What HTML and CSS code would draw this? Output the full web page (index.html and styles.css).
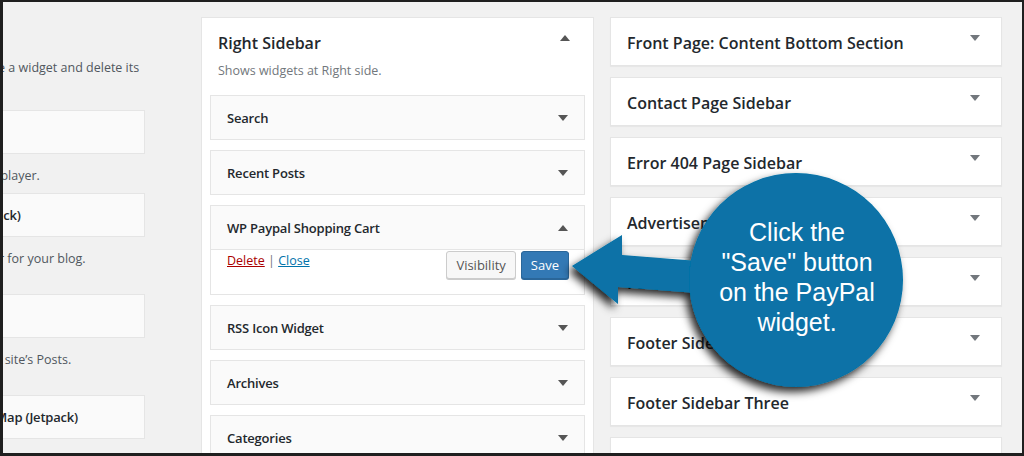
FILE: index.html
```html
<!DOCTYPE html>
<html lang="en">
<head>
  <meta charset="UTF-8">
  <title>Widgets</title>
  <link rel="stylesheet" href="styles.css">
</head>
<body>
  <div class="frame">
    <div class="cols">

      <div class="available">
        <div class="available-inner">
          <p class="intro">To activate a widget drag it to a sidebar or click on it. To deactivate a widget and delete its<br>settings, drag it back.</p>
          <div class="widget-grid">
            <div class="item">
              <div class="card">Archives</div>
              <p class="desc">A monthly archive of your site’s Posts.</p>
            </div>
            <div class="item">
              <div class="card">Audio</div>
              <p class="desc">Displays an audio player.</p>
            </div>
            <div class="item">
              <div class="card">Authors (Jetpack)</div>
              <p class="desc">Display blogs authors with avatars and recent posts, sorted by most recent.</p>
            </div>
            <div class="item">
              <div class="card">Blog Stats (Jetpack)</div>
              <p class="desc">Show a hit counter for your blog.</p>
            </div>
            <div class="item">
              <div class="card">Blog Subscriptions (Jetpack)</div>
              <p class="desc">Add an email signup form to allow people to subscribe to your blog.</p>
            </div>
            <div class="item">
              <div class="card">Calendar</div>
              <p class="desc">A calendar of your site’s Posts.</p>
            </div>
            <div class="item">
              <div class="card">Categories</div>
              <p class="desc">A list or dropdown of categories.</p>
            </div>
            <div class="item">
              <div class="card">Contact Info &amp; Map (Jetpack)</div>
              <p class="desc">Display your location, hours, and contact information.</p>
            </div>
          </div>
        </div>
      </div>

      <div class="sidebar">
        <div class="sidebar-head">
          <h2>Right Sidebar</h2>
          <span class="arrow up"></span>
        </div>
        <p class="sidebar-desc">Shows widgets at Right side.</p>

        <div class="widget"><div class="widget-top"><span>Search</span><span class="arrow down"></span></div></div>
        <div class="widget"><div class="widget-top"><span>Recent Posts</span><span class="arrow down"></span></div></div>
        <div class="widget">
          <div class="widget-top open"><span>WP Paypal Shopping Cart</span><span class="arrow up"></span></div>
          <div class="widget-inside">
            <div class="links"><a href="#" class="delete">Delete</a> | <a href="#" class="close">Close</a></div>
            <div class="buttons">
              <button class="btn">Visibility</button>
              <button class="btn primary">Save</button>
            </div>
          </div>
        </div>
        <div class="widget"><div class="widget-top"><span>RSS Icon Widget</span><span class="arrow down"></span></div></div>
        <div class="widget"><div class="widget-top"><span>Archives</span><span class="arrow down"></span></div></div>
        <div class="widget"><div class="widget-top"><span>Categories</span><span class="arrow down"></span></div></div>
      </div>

      <div class="closed">
        <div class="closed-card"><h3>Front Page: Content Bottom Section</h3><span class="arrow down light"></span></div>
        <div class="closed-card"><h3>Contact Page Sidebar</h3><span class="arrow down light"></span></div>
        <div class="closed-card"><h3>Error 404 Page Sidebar</h3><span class="arrow down light"></span></div>
        <div class="closed-card"><h3>Advertisement Sidebar</h3><span class="arrow down light"></span></div>
        <div class="closed-card"><h3>Footer Sidebar One</h3><span class="arrow down light"></span></div>
        <div class="closed-card"><h3>Footer Sidebar Two</h3><span class="arrow down light"></span></div>
        <div class="closed-card"><h3>Footer Sidebar Three</h3><span class="arrow down light"></span></div>
        <div class="closed-card"><h3>Footer Sidebar Four</h3><span class="arrow down light"></span></div>
      </div>

    </div>

    <!-- callout over the page -->
    <svg class="callout-shape" viewBox="3 2 1019 451" width="1019" height="451">
      <defs>
        <filter id="shadow" x="-20%" y="-20%" width="140%" height="140%">
          <feDropShadow dx="-4" dy="5" stdDeviation="4" flood-color="#000" flood-opacity="0.85"/>
        </filter>
      </defs>
      <g filter="url(#shadow)" fill="#0772a7">
        <polygon points="572,266 622,235 622,255 710,262 710,294 618,287 618,304"/>
        <circle cx="796" cy="280" r="107"/>
      </g>
    </svg>
    <div class="callout-text">Click the<br>"Save" button<br>on the PayPal<br>widget.</div>
  </div>
</body>
</html>
```

FILE: styles.css
```css
body { margin: 0; font-family: "Open Sans", "Noto Sans", sans-serif; font-size: 13px; color: #23282d; }
.frame { position: relative; width: 1024px; height: 456px; box-sizing: border-box; border-style: solid; border-color: #1f1f1f; border-width: 2px 2px 3px 3px; background: #f1f1f1; overflow: hidden; }
.cols { display: flex; align-items: flex-start; padding-top: 15px; }

/* available widgets, cut off on the left */
.available { width: 142px; margin-right: 56px; flex: 0 0 142px; overflow: hidden; display: flex; justify-content: flex-end; }
.available-inner { flex: 0 0 542px; }
.intro { margin: 42px 0 15px; padding-left: 17px; white-space: nowrap; font-size: 12.5px; line-height: 18px; color: #50575e; }
.widget-grid { display: grid; grid-template-columns: 256px 256px; column-gap: 30px; }
.card { height: 44px; box-sizing: border-box; padding: 0 15px; line-height: 42px; background: #fafafa; border: 1px solid #e5e5e5; font-weight: 600; letter-spacing: -0.2px; white-space: nowrap; overflow: hidden; }
.desc { margin: 13px 0 8px 6px; font-size: 12.5px; line-height: 18px; color: #50575e; }

/* open sidebar */
.sidebar { flex: 0 0 393px; box-sizing: border-box; height: 460px; margin-right: 16px; padding: 0 8px; background: #fff; border: 1px solid #e5e5e5; }
.sidebar-head { display: flex; justify-content: space-between; align-items: flex-start; padding: 14px 15px 0 8px; }
.sidebar-head h2 { margin: 0; font-size: 16px; line-height: 22px; font-weight: 600; }
.sidebar-head .arrow { margin-top: 3px; }
.sidebar-desc { margin: 8px 0 15px 8px; font-size: 12.5px; line-height: 18px; color: #72777c; }

.widget { margin-bottom: 10px; background: #fafafa; border: 1px solid #e5e5e5; }
.widget-top { display: flex; justify-content: space-between; align-items: center; height: 43px; padding: 0 16px; font-weight: 600; letter-spacing: -0.2px; }
.widget-top.open { border-bottom: 1px solid #e5e5e5; }
.widget-inside { display: flex; justify-content: space-between; align-items: flex-start; padding: 1px 15px 15px 16px; background: #fff; }
.links { font-size: 12.5px; line-height: 20px; color: #72777c; }
.links a { text-decoration: underline; }
.links .delete { color: #a00; }
.links .close { color: #0073aa; }
.buttons { display: flex; gap: 5px; }
.btn { height: 28px; padding: 0 9px; font-family: inherit; font-size: 13px; color: #555; background: #f7f7f7; border: 1px solid #ccc; border-radius: 3px; box-shadow: 0 1px 0 #ccc; }
.btn.primary { color: #fff; background: #3379b5; border-color: #2a6699; box-shadow: 0 1px 0 #2a6699; }

/* closed sidebars */
.closed { flex: 0 0 392px; }
.closed-card { display: flex; justify-content: space-between; align-items: flex-start; height: 49px; box-sizing: border-box; margin-bottom: 11px; padding: 15px 21px 0 16px; background: #fff; border: 1px solid #e5e5e5; box-shadow: 0 1px 1px rgba(0,0,0,0.04); }
.closed-card h3 { margin: 0; font-size: 16px; line-height: 20px; font-weight: 600; }
.closed-card .arrow { margin-top: 2px; }

.arrow { display: inline-block; width: 0; height: 0; border-left: 5px solid transparent; border-right: 5px solid transparent; }
.arrow.down { border-top: 6px solid #555; }
.arrow.up { border-bottom: 6px solid #555; }
.arrow.light { border-top-color: #72777c; }

/* callout */
.callout-shape { position: absolute; left: 0; top: 0; }
.callout-text { position: absolute; left: 687px; top: 215px; width: 214px; text-align: center; font-family: "Liberation Sans", Arial, sans-serif; font-size: 25px; line-height: 30px; color: #fff; }
```
